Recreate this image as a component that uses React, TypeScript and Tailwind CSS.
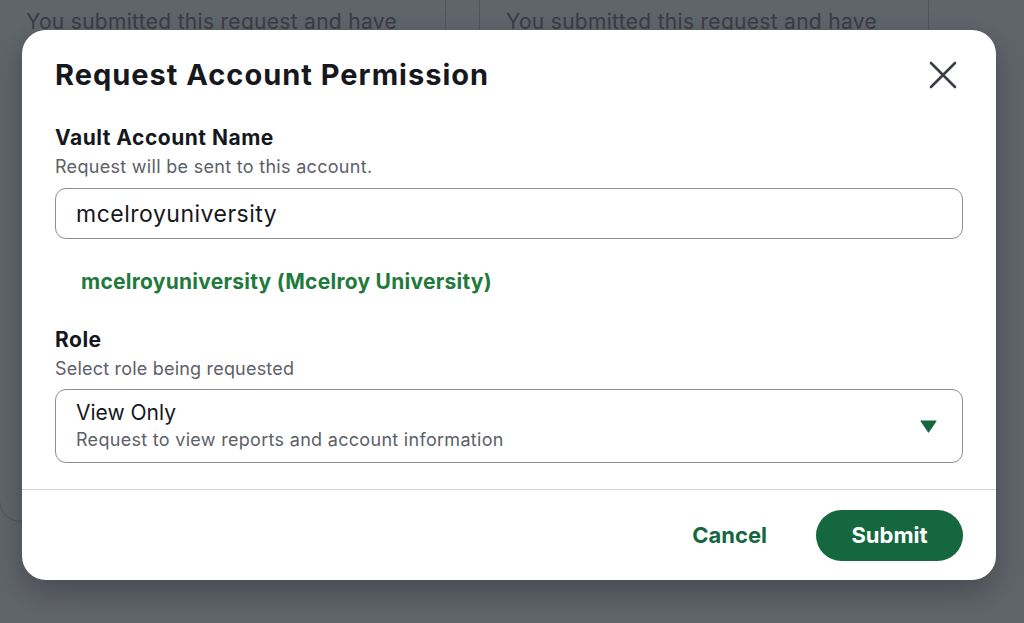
import { useState } from "react";

const font = { fontFamily: 'Inter, "Liberation Sans", Arial, sans-serif' };

function BackgroundCard({ width }: { width: string }) {
  return (
    <div className={`${width} h-[562px] shrink-0 rounded-[22px] border border-[#50545b] px-[26px] pt-[48px]`}>
      <p className="text-[21px] leading-[26px] tracking-[0.3px] text-[#3a3d44]">
        You submitted this request and have
      </p>
    </div>
  );
}

export default function App() {
  const [account, setAccount] = useState<string>("mcelroyuniversity");

  return (
    <div className="relative h-[623px] w-full overflow-hidden bg-[#60646b]" style={font}>
      {/* * page behind the dimmed overlay */}
      <div className="-mt-[40px] -ml-px flex gap-[33px]">
        <BackgroundCard width="w-[447px]" />
        <BackgroundCard width="w-[450px]" />
      </div>

      <div className="absolute left-[22px] top-[30px] flex w-[974px] flex-col rounded-[24px] bg-white shadow-[0_12px_30px_rgba(0,0,0,0.25)]">
        <div className="px-[33px] pt-[27px]">
          <div className="flex items-center justify-between">
            <h2 className="text-[29px] font-bold leading-[36px] tracking-[1px] text-[#16181d]">
              Request Account Permission
            </h2>
            <button className="mr-[6px] text-[#3a3d44]">
              <svg width="28" height="28" viewBox="0 0 28 28" fill="none">
                <path d="M2 2 26 26M26 2 2 26" stroke="currentColor" strokeWidth="2.6" strokeLinecap="round" />
              </svg>
            </button>
          </div>

          <div className="mt-[31px]">
            <p className="text-[21px] font-bold leading-[28px] tracking-[0.5px] text-[#16181d]">Vault Account Name</p>
            <p className="mt-[3px] text-[18px] leading-[24px] tracking-[0.3px] text-[#5d6068]">
              Request will be sent to this account.
            </p>
            <input
              value={account}
              onChange={(e) => setAccount(e.target.value)}
              className="mt-[9px] h-[51px] w-full rounded-[11px] border border-[#8e8f96] px-[20px] text-[23px] tracking-[0.5px] text-[#16181d] outline-none"
              style={font}
            />
            <p className="mt-[30px] pl-[26px] text-[21px] font-bold leading-[26px] tracking-[0.25px] text-[#1f7a3c]">
              mcelroyuniversity (Mcelroy University)
            </p>
          </div>

          <div className="mt-[31px]">
            <p className="text-[21px] font-bold leading-[28px] tracking-[0.5px] text-[#16181d]">Role</p>
            <p className="mt-[3px] text-[18px] leading-[24px] tracking-[0.2px] text-[#5d6068]">
              Select role being requested
            </p>
            <div className="mt-[8px] flex h-[74px] w-full items-center justify-between rounded-[11px] border border-[#8e8f96] pl-[20px] pr-[25px]">
              <div>
                <p className="text-[21px] leading-[26px] text-[#16181d]">View Only</p>
                <p className="mt-[2px] text-[18px] leading-[24px] tracking-[0.3px] text-[#5d6068]">
                  Request to view reports and account information
                </p>
              </div>
              <svg width="17" height="13" viewBox="0 0 17 13">
                <path d="M1 1h15l-7.5 11z" fill="#14673e" stroke="#14673e" strokeWidth="1.2" strokeLinejoin="round" />
              </svg>
            </div>
          </div>
        </div>

        <div className="mt-[26px] border-t border-[#d4d5d9]" />

        <div className="flex items-center justify-end gap-[49px] px-[33px] pb-[19px] pt-[20px]">
          <button className="text-[22px] font-bold text-[#14673e]">Cancel</button>
          <button className="h-[51px] w-[147px] rounded-full bg-[#14673e] text-[22px] font-bold text-white">
            Submit
          </button>
        </div>
      </div>
    </div>
  );
}
